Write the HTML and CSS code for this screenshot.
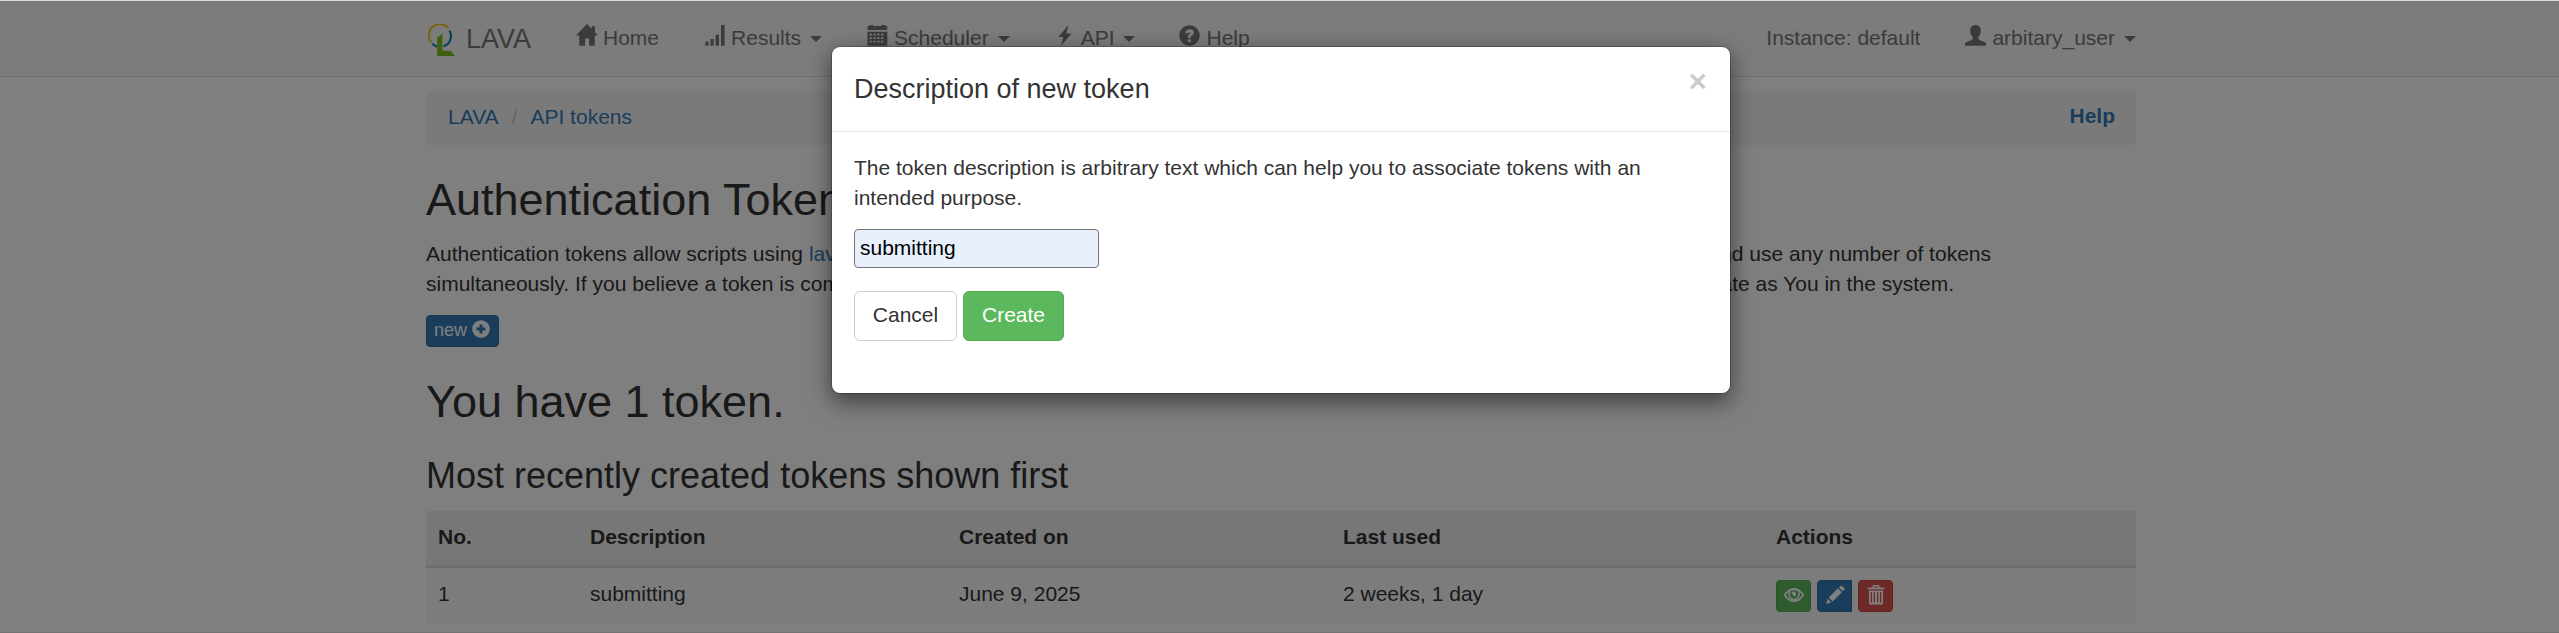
FILE: index.html
```html
<!DOCTYPE html>
<html lang="en">
<head>
<meta charset="utf-8">
<title>API tokens</title>
<link rel="stylesheet" href="styles.css">
</head>
<body>
<div class="page">
  <nav class="navbar">
    <div class="container nav-row">
      <a class="brand">
        <svg class="logo" viewBox="0 0 28 33"><path d="M20.500 4.200A10.600 10.600 0 1 0 3.200 18.300" fill="none" stroke="#f0c420" stroke-width="2"/><path d="M21.300 6.500A10.600 10.600 0 0 1 15.500 22.300M4.300 19.700A10.600 10.600 0 0 0 9 22.800" fill="none" stroke="#0080a8" stroke-width="2"/><path d="M9.200 13.500l5.200-4v17.300h8.400l4.200 5.200H9.200z" fill="#83c01e"/></svg>
        <span>LAVA</span>
      </a>
      <ul class="menu">
        <li><svg class="icon" viewBox="0 0 21 21"><path d="M10.900-1L0 10.600h3.200v10.100h5.900v-7.200h4v7.200h5.700V10.600H22l-3-3.400V1.200h-3.200v2.600z"/></svg>Home</li>
        <li><svg class="icon" viewBox="0 0 21 21"><path d="M1.300 16.500h3.300v4.200H1.300zM6.400 14h3.300v6.700H6.400zM11.600 9.800h3.400v10.900h-3.400zM17 0h3.600v20.700H17z"/></svg>Results<i class="caret"></i></li>
        <li><svg class="icon" viewBox="0 0 21 21"><path fill-rule="evenodd" d="M.5 5V2q0-1 1-1H2.600V0h3.600v1H14.500V0h3.600v1h1.200q1 0 1 1v3zM.5 6.800h19.800v12.900q0 1-1 1H1.500q-1 0-1-1zM2.600 8.800v1.700h2.300V8.800zm3.800 0v1.700h2.300V8.800zm3.800 0v1.700h2.300V8.800zm3.800 0v1.700h2.300V8.800zM2.600 12.300V14h2.300v-1.700zm3.800 0V14h2.300v-1.700zm3.800 0V14h2.300v-1.700zm3.800 0V14h2.300v-1.700zM2.600 15.800v1.700h2.300v-1.700zm3.800 0v1.700h2.300v-1.700zm3.800 0v1.700h2.300v-1.700zm3.800 0v1.700h2.300v-1.700z"/></svg>Scheduler<i class="caret"></i></li>
        <li class="api"><svg class="icon" viewBox="0 0 21 21"><path d="M14.500 0L4.200 12h5.200L7 20.700 17.600 8.600h-5.400z"/></svg>API<i class="caret"></i></li>
        <li><svg class="icon" viewBox="0 0 21 21"><circle cx="10.500" cy="10.500" r="10.200"/><path class="cut" d="M6.200 8.400Q6.500 4.200 10.700 4.200q4.200.2 4.200 3.600 0 2.200-2.900 3.500v1.700H8.900v-2.900q2.300-.7 2.300-2 0-.9-.7-.9-.9 0-.9 1.400zM8.900 14.300H12v2.900H8.900z"/></svg>Help</li>
      </ul>
      <ul class="menu menu-right">
        <li>Instance: default</li>
        <li><svg class="icon" viewBox="0 0 21 21"><path d="M10.500 0C7.200 0 5.200 2.200 5.200 5.600c0 3.400 1.300 5.400 2.600 6.600v1.300Q7.700 14.500 5 15.700 0 17.500-.1 18.400v2.300h21.200v-2.300Q21 17.500 16 15.700q-2.700-1.200-2.800-2.200v-1.300c1.300-1.200 2.600-3.200 2.600-6.600C15.800 2.200 13.800 0 10.500 0z"/></svg>arbitary_user<i class="caret"></i></li>
      </ul>
    </div>
  </nav>

  <main class="container">
    <div class="breadcrumb">
      <div><a>LAVA</a><span class="sep">/</span><a>API tokens</a></div>
      <a class="help">Help</a>
    </div>
    <h2>Authentication Tokens</h2>
    <div class="intro">
      <p class="line line-first"><span>Authentication tokens allow scripts using <a>lavacli</a> to authenticate.</span><span>You can create and use any number of tokens</span></p>
      <p class="line line-second"><span>simultaneously. If you believe a token is compromised, delete it.</span><span>Scripts authenticate as You in the system.</span></p>
    </div>
    <a class="btn btn-new">new <svg class="icon-sm" viewBox="0 0 18 18"><path fill-rule="evenodd" d="M9 .2a8.800 8.800 0 1 0 0 17.600A8.800 8.800 0 1 0 9 .2zM7.500 4.600h3v2.900h2.900v3h-2.900v2.900h-3v-2.900H4.600v-3h2.900z"/></svg></a>
    <h2 class="count">You have 1 token.</h2>
    <h3>Most recently created tokens shown first</h3>
    <table class="tokens">
      <colgroup><col class="c-no"><col class="c-desc"><col class="c-created"><col class="c-used"><col></colgroup>
      <thead><tr><th>No.</th><th>Description</th><th>Created on</th><th>Last used</th><th>Actions</th></tr></thead>
      <tbody><tr>
        <td>1</td><td>submitting</td><td>June 9, 2025</td><td>2 weeks, 1 day</td>
        <td class="actions-cell"><div class="actions">
          <a class="btn-xs green"><svg viewBox="0 0 20 20"><path d="M.8 10Q4.500 3.800 10 3.800T19.200 10Q15.500 16.200 10 16.200T.8 10z" fill="none" stroke="#fff" stroke-width="1.700"/><path d="M2 8Q5 3.500 10 3.500T18 8L15.500 7.500Q13 5.200 10 5.200T4.500 7.500z"/><path d="M5.800 7.200a4.900 4.900 0 1 0 8.600 0" fill="none" stroke="#fff" stroke-width="1.600"/><path d="M10.200 6.200q-2.600.2-3 2.800l1.600.3q-.1 1.500 1.300 1.900 1.700.2 2.200-1.500.1-2.800-2.100-3.500z"/></svg></a>
          <a class="btn-xs blue"><svg viewBox="0 0 20 20"><path d="M1 19l1.700-5.300 3.700 3.700zM3.700 12.600L13 3.300l3.900 3.900-9.300 9.300zM14 2.400L15.500.9q.7-.7 1.400 0l2.400 2.400q.7.700 0 1.400l-1.500 1.500z"/></svg></a>
          <a class="btn-xs red"><svg viewBox="0 0 20 20"><path fill-rule="evenodd" d="M6.500 2.500V1q0-1 1-1h5q1 0 1 1v1.500h4.800v1.700H1.700V2.500zM8 2.500h4V1.500H8zM3 5.500h14v12.900q0 1-1 1H4q-1 0-1-1zM4.700 7.300v10.200H6V7.300zm3 0v10.200H9V7.300zm3.300 0v10.200h1.300V7.300zm3 0v10.200h1.300V7.300z"/></svg></a>
        </div></td>
      </tr></tbody>
    </table>
  </main>
</div>
<div class="backdrop">
  <section class="modal">
    <header class="modal-header"><h4>Description of new token</h4><button class="close">×</button></header>
    <div class="modal-body">
      <p>The token description is arbitrary text which can help you to associate tokens with an intended purpose.</p>
      <input class="field" type="text" value="submitting">
      <div class="buttons"><button class="btn cancel">Cancel</button><button class="btn create">Create</button></div>
    </div>
  </section>
</div>
</body>
</html>
```
FILE: styles.css
```css
* { box-sizing: border-box; }
html { overflow: hidden; height: 633px; background: #d6dcdb; }
body {
  margin: 0;
  height: 633px;
  overflow: hidden;
  padding-top: 1px;
  font: 21px/30px "Liberation Sans", Arial, sans-serif;
  color: #333;
}
a { color: #337ab7; text-decoration: none; }
h2, h3, h4, p, ul { margin: 0; padding: 0; font-weight: 500; }
.page { height: 632px; overflow: hidden; background: #fff; border-bottom: 1px solid #e4e4e4; }
.container { width: 1710px; margin-left: 426px; }
.navbar { height: 76px; background: #f8f8f8; border-bottom: 1px solid #e0e0e0; color: #777; }
.nav-row { display: flex; height: 75px; }
.brand { display: flex; width: 150px; color: #777; font-size: 27px; padding-top: 23px; }
.brand span { margin-left: 10px; }
.logo { width: 28px; height: 33px; margin-left: 2px; }
.menu { display: flex; gap: 45px; list-style: none; padding-top: 22px; }
.menu-right { margin-left: auto; }
.menu li { display: flex; white-space: nowrap; }
.menu .api { margin-left: -1px; margin-right: -1px; }
.icon { width: 21px; height: 21px; margin-top: 2px; margin-right: 6px; fill: #777; overflow: visible; }
.cut { fill: #f8f8f8; }
.caret {
  margin: 13px 0 0 9px;
  height: 0;
  border-left: 6px solid transparent;
  border-right: 6px solid transparent;
  border-top: 6px solid #777;
}
.breadcrumb {
  display: flex;
  justify-content: space-between;
  height: 54px;
  margin-top: 14px;
  padding: 11px 21px 11px 22px;
  background: #f5f5f5;
  border-radius: 6px;
}
.sep { color: #ccc; padding: 0 13px; }
.help { font-weight: 700; margin-top: -1px; }
h2 { font-size: 45px; line-height: 50px; margin-top: 30px; }
.intro { margin-top: 14px; }
.line { display: flex; justify-content: space-between; white-space: nowrap; }
.line-first { width: 1565px; }
.line-second { width: 1528px; }
.btn-new {
  display: flex;
  width: 73px;
  height: 32px;
  margin-top: 16px;
  padding: 0 0 2px 7px;
  align-items: center;
  gap: 5px;
  color: #fff;
  background: #337ab7;
  border: 1px solid #2e6da4;
  border-radius: 4px;
  font-size: 18px;
}
.icon-sm { width: 18px; height: 18px; fill: #fff; margin-top: -2px; }
.count { margin-top: 30px; }
h3 { font-size: 36px; line-height: 40px; margin-top: 29px; }
.tokens { width: 1710px; margin-top: 15px; table-layout: fixed; border-collapse: separate; border-spacing: 0; text-align: left; }
.c-no { width: 152px; }
.c-desc { width: 369px; }
.c-created { width: 384px; }
.c-used { width: 433px; }
.tokens th { height: 57px; padding: 0 12px 2px; background: #eee; border-bottom: 3px solid #ddd; line-height: 30px; }
.tokens td { height: 56px; padding: 0 12px 4px; background: #f9f9f9; }
.tokens .actions-cell { padding-bottom: 0; }
.actions { display: flex; gap: 6px; }
.btn-xs { display: flex; justify-content: center; width: 35px; height: 32px; padding-top: 4px; border: 1px solid; border-radius: 4px; }
.btn-xs svg { width: 20px; height: 20px; fill: #fff; }
.green { background: #5cb85c; border-color: #4cae4c; }
.blue { background: #337ab7; border-color: #2e6da4; border-radius: 4px 0 0 4px; }
.red { background: #d9534f; border-color: #d43f3a; }
.backdrop { position: absolute; top: 1px; left: 0; width: 2559px; height: 632px; background: rgba(0, 0, 0, .5); overflow: hidden; }
.modal {
  width: 900px;
  height: 348px;
  margin: 45px 0 0 831px;
  background: #fff;
  background-clip: padding-box;
  border: 1px solid rgba(0, 0, 0, .2);
  border-radius: 9px;
  box-shadow: 0 7.5px 22.5px rgba(0, 0, 0, .5);
}
.modal-header { display: flex; justify-content: space-between; height: 85px; padding: 22px 23px 22px 22px; border-bottom: 1px solid #e5e5e5; }
h4 { font-size: 27px; line-height: 41px; }
.close { height: 32px; margin-top: -4px; padding: 0; border: 0; background: none; font: 700 31.5px/32px "Liberation Sans", Arial, sans-serif; color: #000; opacity: .2; text-shadow: 0 1.5px 0 #fff; }
.modal-body { padding: 21px 22px; }
.field { display: block; width: 245px; height: 39px; margin-top: 16px; padding: 0 5px 1px; border: 1px solid #767676; border-radius: 4px; background: #e8f0fe; color: #000; font: inherit; }
.buttons { display: flex; gap: 6px; margin-top: 23px; }
.btn { font-family: inherit; }
.buttons .btn { height: 50px; padding: 0 0 3px; border: 1px solid #ccc; border-radius: 6px; background: #fff; color: #333; font-size: 21px; }
.buttons .cancel { width: 103px; }
.buttons .create { width: 101px; background: #5cb85c; border-color: #4cae4c; color: #fff; }
```
